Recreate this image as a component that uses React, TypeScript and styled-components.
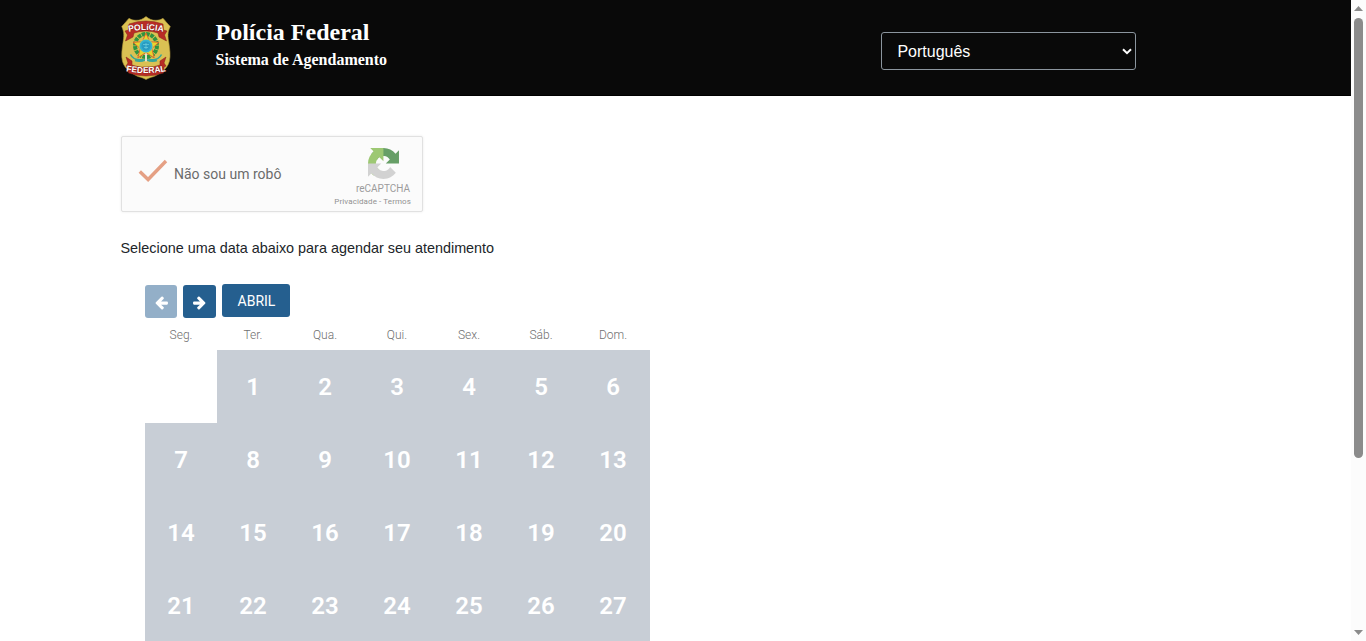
import React from 'react';
import styled, { createGlobalStyle } from 'styled-components';

const GlobalStyle = createGlobalStyle`
  * { box-sizing: border-box; }
  html, body { margin: 0; padding: 0; overflow: hidden; background: #fff; }
  body { font-family: Roboto, "Liberation Sans", sans-serif; color: #212529; }
`;

const Window = styled.div`
  display: flex;
  width: 1366px;
  height: 641px;
  overflow: hidden;
`;

const Page = styled.div`
  width: 1351px;
  height: 641px;
  overflow: hidden;
  background: #fff;
`;

const Header = styled.header`
  display: flex;
  align-items: flex-start;
  height: 96px;
  padding: 0 0 0 121px;
  background: #090909;
  border-bottom: 1px solid #000;
  color: #fff;
`;

const Badge = styled.svg`
  display: block;
  width: 50px;
  height: 64px;
  margin-top: 16px;
`;

const Titles = styled.div`
  width: 665px;
  padding: 18px 0 0 44.5px;
  font-family: "Liberation Serif", serif;
  font-weight: 700;
`;

const Title = styled.h1`
  margin: 0;
  font-size: 24px;
  line-height: 28px;
`;

const Subtitle = styled.h2`
  margin: 5px 0 0;
  font-size: 16px;
  line-height: 18px;
`;

const LanguageBox = styled.div`
  display: flex;
  align-items: center;
  justify-content: space-between;
  width: 255px;
  height: 38px;
  margin: 32px 0 0 45px;
  padding: 1px 3px 0 15.4px;
  border: 1px solid #8b959e;
  border-radius: 3px;
  font: 16px "Liberation Sans", Arial, sans-serif;
  svg { display: block; width: 10px; height: 7px; }
`;

const Main = styled.main`
  padding: 40px 0 0 121px;
`;

const Captcha = styled.div`
  display: flex;
  width: 302px;
  height: 76px;
  border: 1px solid #e1e1e1;
  border-radius: 2px;
  background: #fbfbfb;
  box-shadow: 0 0 3px rgba(0, 0, 0, 0.08);
`;

const CheckMark = styled.svg`
  width: 30px;
  height: 24px;
  margin: 22px 0 0 16px;
`;

const CaptchaLabel = styled.span`
  width: 160px;
  margin: 29px 0 0 6px;
  font-size: 14px;
  line-height: 17px;
  color: #6b6b6b;
`;

const CaptchaBrand = styled.div`
  display: flex;
  flex-direction: column;
  align-items: flex-end;
  width: 77px;
  padding-top: 11px;
  white-space: nowrap;
  svg { display: block; width: 31px; height: 31px; margin-right: 12.5px; }
`;

const BrandName = styled.span`
  margin: 4px 1px 0 0;
  font-size: 10px;
  line-height: 12px;
  color: #9b9b9b;
`;

const BrandLinks = styled.span`
  margin-top: 2px;
  font-size: 8px;
  line-height: 10px;
  letter-spacing: 0.1px;
  color: #929292;
`;

const Instruction = styled.p`
  margin: 27px 0 0 -0.5px;
  font: 14.4px/18px "Liberation Sans", Arial, sans-serif;
  color: #212529;
`;

const Calendar = styled.section`
  width: 505px;
  margin: 27px 0 0 24px;
`;

const Controls = styled.div`
  display: flex;
  align-items: flex-start;
  height: 34px;
`;

const ArrowButton = styled.button<{ $muted?: boolean }>`
  display: flex;
  align-items: center;
  justify-content: center;
  width: ${(p) => (p.$muted ? 32 : 33)}px;
  height: 33px;
  margin: 1px 6px 0 0;
  padding: 1px 0 0;
  border: 0;
  border-radius: 3px;
  background: ${(p) => (p.$muted ? '#93afc8' : '#255f8f')};
  svg { display: block; width: 13px; height: 15px; fill: #fff; }
`;

const MonthButton = styled.button`
  width: 68px;
  height: 33px;
  padding: 1px 0 0 1px;
  border: 0;
  border-radius: 3px;
  background: #255f8f;
  color: #fff;
  font: 14px/32px Roboto, sans-serif;
`;

const Week = styled.div`
  display: grid;
  grid-template-columns: repeat(6, 72px) 73px;
`;

const WeekDay = styled.div`
  height: 32px;
  font-size: 12px;
  font-weight: 300;
  line-height: 34px;
  text-align: center;
  color: #6f6f6f;
  &:nth-child(7n) { padding-right: 1px; }
`;

const Day = styled.div<{ $empty?: boolean }>`
  height: 73px;
  background: ${(p) => (p.$empty ? '#fff' : '#c8ced6')};
  color: #fff;
  font-size: 24px;
  font-weight: 600;
  line-height: 75px;
  text-align: center;
  &:nth-child(7n) { padding-right: 1px; }
`;

const ScrollTrack = styled.div`
  display: flex;
  flex-direction: column;
  align-items: center;
  width: 15px;
  height: 641px;
  padding: 6px 0;
  background: #fcfcfc;
`;

const ScrollThumb = styled.div`
  width: 9px;
  height: 440px;
  margin: 7px 0 auto;
  border-radius: 5px;
  background: #8b8b8b;
`;

const ScrollArrow = styled.svg`
  display: block;
  width: 9px;
  height: 5px;
  fill: #8b8b8b;
`;

const weekDays = ['Seg.', 'Ter.', 'Qua.', 'Qui.', 'Sex.', 'Sáb.', 'Dom.'];
const days = [0, ...Array.from({ length: 27 }, (_, i) => i + 1)];

const ArrowIcon = ({ right }: { right?: boolean }) => (
  <svg viewBox="0 0 1536 1792">
    <path
      transform={right ? 'translate(1536 0) scale(-1 1)' : undefined}
      d="M1536 896v128q0 53-32.5 90.5t-84.5 37.5h-704l293 294q38 36 38 90t-38 90l-75 76q-37 37-90 37-52 0-91-37l-651-652q-37-37-37-90 0-52 37-91l651-650q38-38 91-38 52 0 90 38l75 74q38 38 38 91t-38 91l-293 293h704q52 0 84.5 37.5t32.5 90.5z"
    />
  </svg>
);

const PoliceBadge = () => (
  <Badge viewBox="0 0 50 64">
    <path
      d="M25 .5C28 3 31 4.500 35 4.300c3 0 5-.8 7-2 2 2 4 5 7.300 8.200-3 6-2.500 10-1.500 16 1 7 2 13 .5 19C46 54 38 58 33 60.500c-4 1-6 2-8 3-2-1-4-2-8-3C12 58 4 54 1.500 45.500 0 39.500 1 33.500 2 26.500 3 20.500 3.500 16.500.7 10.500 4 7.300 6 4.300 8 2.300c2 1.200 4 2 7 2 4 .2 7-1.300 10-3.800z"
      fill="#dac153"
      stroke="#aa9138"
      strokeWidth=".6"
    />
    <ellipse cx="25" cy="29.500" rx="11" ry="11.500" fill="none" stroke="#2f9440" strokeWidth="4" strokeDasharray="3.600 .8" />
    <path d="M25 17l3.700 8.700 9.300.6-7.200 6.300 2.400 9.300L25 36.500l-8.200 5.400 2.400-9.300-7.200-6.300 9.300-.6z" fill="#e8d52c" stroke="#e0532b" strokeWidth=".8" />
    <circle cx="25" cy="30" r="6.800" fill="#35b3cf" stroke="#d8d04b" strokeWidth=".6" />
    <circle cx="25" cy="30" r="4.600" fill="#299cc2" />
    <path d="M22 28.500h6M23 31.500h4M25 27v6" stroke="#6fd0df" strokeWidth=".7" />
    <path d="M9.500 38.500c2 4 7 6 13 5M40.500 38.500c-2 4-7 6-13 5M14 44.500c4 1.500 8 .5 11-1 3 1.500 7 2.500 11 1" fill="none" stroke="#37a597" strokeWidth="1.600" />
    <path d="M25 37.500v8" stroke="#e5e3cc" strokeWidth="2" />
    <path d="M8 8q17-6 34 0l.5 6 3.500 1-2.500 4 2 6-7.500-4-1-4q-12-4-24 0l-1 4-7.500 4 2-6L4 15l3.500-1z" fill="#b92c26" stroke="#812319" strokeWidth=".5" />
    <path d="M5 41l6 4v4q14 5 28 0v-4l6-4-2 6 2 3-2 1-.5 6q-17.500 6-35 0L7 51l-2-1 2-3z" fill="#b92c26" stroke="#812319" strokeWidth=".5" />
    <defs>
      <path id="badge-top" d="M5 16.500Q25 11.500 45 16.500" />
      <path id="badge-bottom" d="M3 54.700Q25 59.300 47 54.700" />
    </defs>
    <g fill="#fff" stroke="#7c1d18" strokeWidth=".7" paintOrder="stroke" fontFamily="Liberation Sans, sans-serif" fontWeight="700" textAnchor="middle">
      <text fontSize="8.600"><textPath href="#badge-top" startOffset="50%">POLíCIA</textPath></text>
      <text fontSize="8.500"><textPath href="#badge-bottom" startOffset="50%">FEDERAL</textPath></text>
    </g>
  </Badge>
);

const RecaptchaLogo = () => (
  <svg viewBox="0 0 64 64">
    <path fill="#679f67" d="M64 31.955l-.033-1.370V4.687l-7.160 7.160C50.948 4.674 42.033.093 32.050.093c-10.400 0-19.622 4.960-25.458 12.640l11.736 11.860a15.550 15.550 0 0 1 4.754-5.334c2.050-1.600 4.952-2.906 8.968-2.906.485 0 .860.057 1.135.163 4.976.393 9.288 3.140 11.828 7.124l-8.307 8.307 27.295-.004" />
    <path fill="#9dc873" d="M31.862.094l-1.370.033H4.594l7.160 7.160C4.580 13.147 0 22.060 0 32.046c0 10.400 4.960 19.622 12.640 25.458L24.500 45.768a15.550 15.550 0 0 1-5.334-4.754c-1.600-2.050-2.906-4.952-2.906-8.968 0-.485.057-.860.163-1.135.393-4.976 3.140-9.288 7.124-11.828l8.307 8.307-.004-27.295" />
    <path fill="#d2d2d2" d="M.001 32.045l.033 1.370v25.898l7.160-7.160c5.860 7.173 14.774 11.754 24.760 11.754 10.400 0 19.622-4.960 25.458-12.640l-11.736-11.860a15.550 15.550 0 0 1-4.754 5.334c-2.050 1.600-4.952 2.906-8.968 2.906-.485 0-.860-.057-1.135-.163-4.976-.393-9.288-3.140-11.828-7.124l8.307-8.307c-10.522.040-22.400.066-27.295-.005" />
  </svg>
);

export default function App() {
  return (
    <>
      <GlobalStyle />
      <Window>
        <Page>
          <Header>
            <PoliceBadge />
            <Titles>
              <Title>Polícia Federal</Title>
              <Subtitle>Sistema de Agendamento</Subtitle>
            </Titles>
            <LanguageBox>
              Português
              <svg viewBox="0 0 10 7"><path d="M1 1.200l4 4 4-4" fill="none" stroke="#fff" strokeWidth="2" /></svg>
            </LanguageBox>
          </Header>
          <Main>
            <Captcha>
              <CheckMark viewBox="0 0 30 24"><path d="M1.800 12.500l8.300 8L28 2" fill="none" stroke="#e5a084" strokeWidth="3.400" /></CheckMark>
              <CaptchaLabel>Não sou um robô</CaptchaLabel>
              <CaptchaBrand>
                <RecaptchaLogo />
                <BrandName>reCAPTCHA</BrandName>
                <BrandLinks>Privacidade - Termos</BrandLinks>
              </CaptchaBrand>
            </Captcha>
            <Instruction>Selecione uma data abaixo para agendar seu atendimento</Instruction>
            <Calendar>
              <Controls>
                <ArrowButton $muted aria-label="Mês anterior"><ArrowIcon /></ArrowButton>
                <ArrowButton aria-label="Próximo mês"><ArrowIcon right /></ArrowButton>
                <MonthButton>ABRIL</MonthButton>
              </Controls>
              <Week>
                {weekDays.map((d) => <WeekDay key={d}>{d}</WeekDay>)}
                {days.map((d) => <Day key={d} $empty={!d}>{d || ''}</Day>)}
              </Week>
            </Calendar>
          </Main>
        </Page>
        <ScrollTrack>
          <ScrollArrow viewBox="0 0 9 5"><path d="M0 5L4.500 0 9 5z" /></ScrollArrow>
          <ScrollThumb />
          <ScrollArrow viewBox="0 0 9 5"><path d="M0 0h9L4.500 5z" /></ScrollArrow>
        </ScrollTrack>
      </Window>
    </>
  );
}
